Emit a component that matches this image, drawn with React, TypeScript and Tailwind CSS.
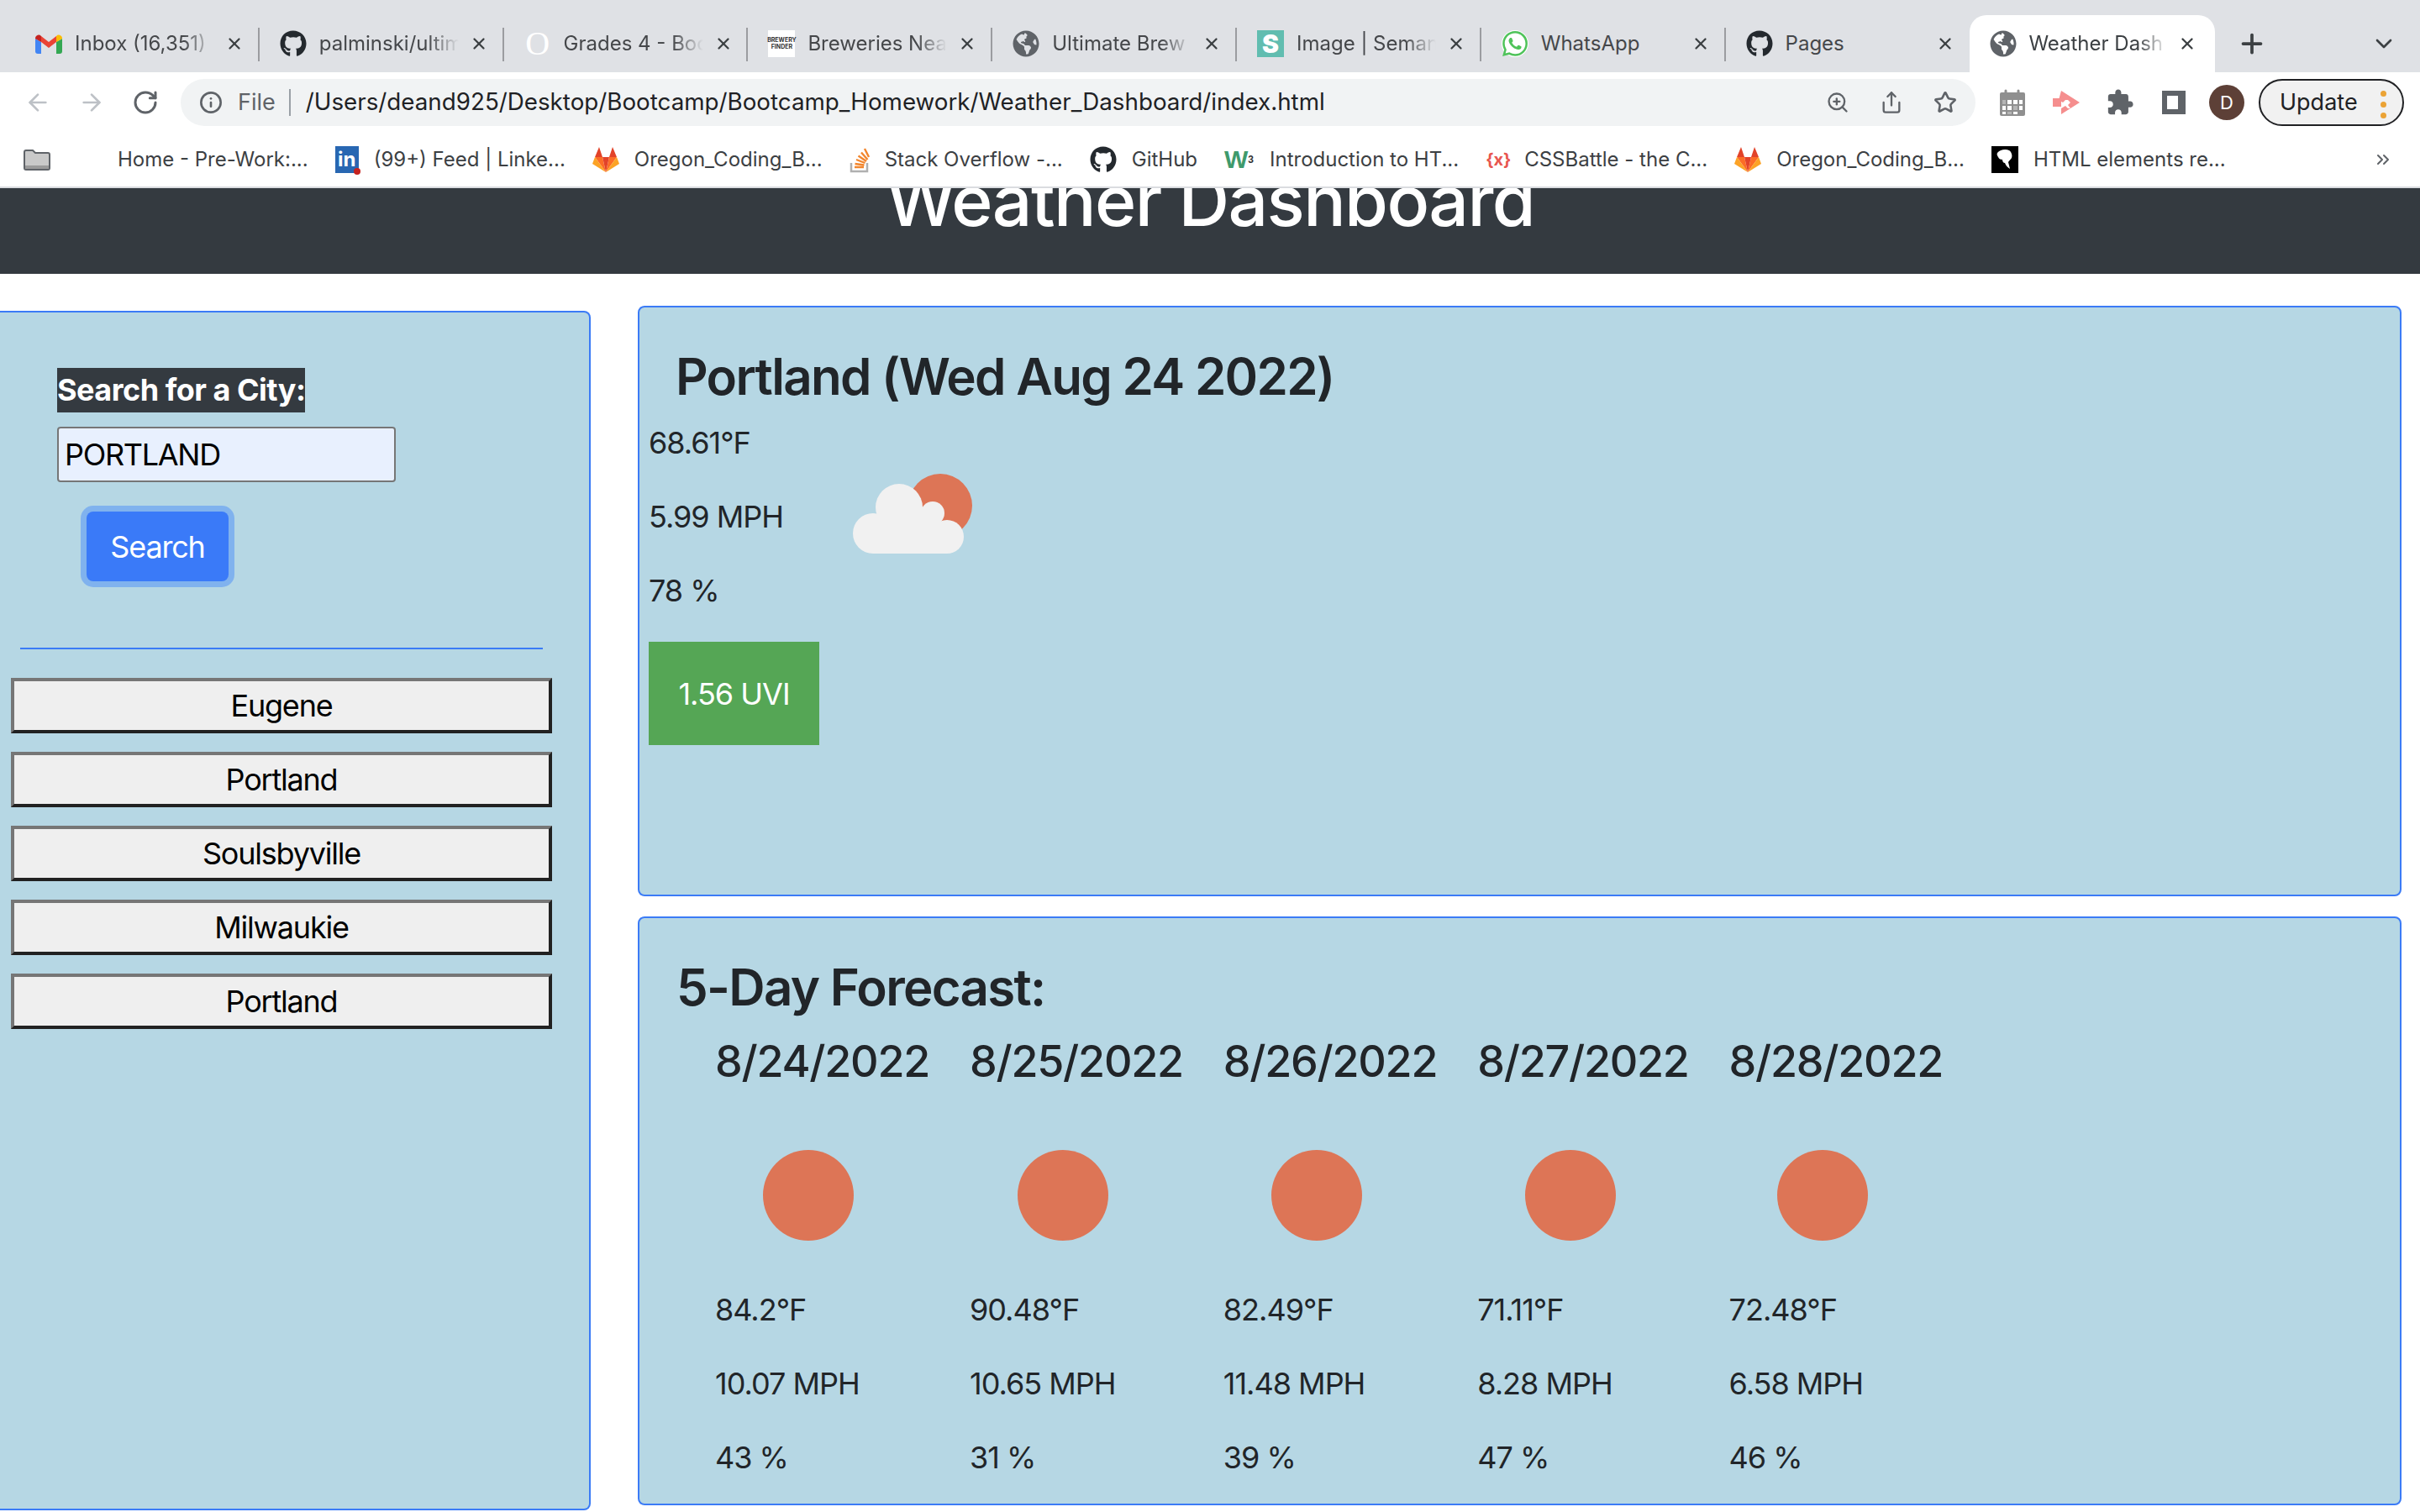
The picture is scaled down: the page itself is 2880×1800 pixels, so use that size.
import { ArrowLeft, ArrowRight, ChevronDown, ChevronsRight, Info, Plus, RotateCw, Share, Star, X, ZoomIn } from "lucide-react";
import type { ReactNode } from "react";
import { FaGithub, FaGlobeAmericas } from "react-icons/fa";
import { SiWhatsapp } from "react-icons/si";

/* ─── Favicons ─── */

function Gmail() {
  return (
    <svg viewBox="0 0 32 24" className="w-8 h-6 shrink-0">
      <path d="M0 6v15a3 3 0 0 0 3 3h4V10z" fill="#4285f4" />
      <path d="M32 6v15a3 3 0 0 1-3 3h-4V10z" fill="#34a853" />
      <path d="M7 10l9 7 9-7V3l-9 7-9-7z" fill="#ea4335" />
      <path d="M0 6V5a4 4 0 0 1 7-2v7z" fill="#c5221f" />
      <path d="M32 6V5a4 4 0 0 0-7-2v7z" fill="#fbbc04" />
    </svg>
  );
}

function GitLab() {
  return (
    <svg viewBox="0 0 32 30" className="w-8 h-[30px] shrink-0">
      <polygon points="3,12 8,0 12,12" fill="#e24329" />
      <polygon points="20,12 24,0 29,12" fill="#e24329" />
      <polygon points="3,12 12,12 16,30" fill="#fc6d26" />
      <polygon points="20,12 29,12 16,30" fill="#fc6d26" />
      <polygon points="12,12 20,12 16,30" fill="#e24329" />
      <polygon points="3,12 0,20 16,30" fill="#fca326" />
      <polygon points="29,12 32,20 16,30" fill="#fca326" />
    </svg>
  );
}

function StackOverflow() {
  return (
    <svg viewBox="0 0 24 32" className="w-6 h-8 shrink-0">
      <path d="M2 20v10h19V20" fill="none" stroke="#b0b0b0" strokeWidth="2.5" />
      <path d="M6 25h11M6.5 21l11 1.5M8 16l10.5 4M10.5 11.5l9.5 6.5M14 7.5l7.5 8.5M18 3l5 10" stroke="#f2862e" strokeWidth="2.4" fill="none" />
    </svg>
  );
}

function Folder() {
  return (
    <svg viewBox="0 0 32 26" className="w-8 h-[26px] shrink-0">
      <path d="M1 4a2 2 0 0 1 2-2h8l3 3h15a2 2 0 0 1 2 2v16a2 2 0 0 1-2 2H3a2 2 0 0 1-2-2z" fill="#c9c9c9" stroke="#5f6368" strokeWidth="2" />
      <path d="M2 20h28v4H2z" fill="#9a9a9a" />
    </svg>
  );
}

function Calendar() {
  return (
    <svg viewBox="0 0 30 32" className="w-[30px] h-8">
      <rect x="0" y="4" width="30" height="28" rx="2" fill="#8f8f8f" />
      <path d="M7 8V2M22 8V2" stroke="#8f8f8f" strokeWidth="3" strokeLinecap="round" />
      <path d="M9 13h5v5H9zM16 13h5v5h-5zM23 13h4v5h-4zM3 20h4v5H3zM9 20h5v5H9zM23 20h4v5h-4zM3 27h4v3H3zM16 27h5v3h-5z" fill="#fff" />
      <path d="M3 13h4v5H3zM16 20h5v5h-5zM9 27h5v3H9z" fill="#b5b5b5" />
    </svg>
  );
}

function ArrowExt() {
  return (
    <svg viewBox="0 0 32 28" className="w-8 h-7">
      <path d="M0 9h10v10H0z" fill="#f58e8e" />
      <path d="M10 0l22 14-22 14v-7l5-3 3 3h3l-3-4 3-3-3-3h-3l-3 3-5-3z" fill="#f58e8e" />
    </svg>
  );
}

function Extension() {
  return (
    <svg viewBox="0 0 24 24" className="w-[34px] h-[34px]">
      <path
        fill="#5f6368"
        d="M20.5 11H19V7c0-1.1-.9-2-2-2h-4V3.5C13 2.12 11.88 1 10.5 1S8 2.12 8 3.5V5H4c-1.1 0-1.99.9-1.99 2v3.8H3.5c1.49 0 2.7 1.21 2.7 2.7s-1.21 2.7-2.7 2.7H2V20c0 1.1.9 2 2 2h3.8v-1.5c0-1.49 1.21-2.7 2.7-2.7 1.49 0 2.7 1.21 2.7 2.7V22H17c1.1 0 2-.9 2-2v-4h1.5c1.38 0 2.5-1.12 2.5-2.5S21.88 11 20.5 11z"
      />
    </svg>
  );
}

function SidebarIcon() {
  return (
    <svg viewBox="0 0 28 28" className="w-7 h-7">
      <path d="M0 0h28v28H0zM6 6v16h13V6z" fill="#5f6368" fillRule="evenodd" />
    </svg>
  );
}

function Dino() {
  return (
    <div className="w-8 h-8 bg-black shrink-0 flex items-center justify-center">
      <svg viewBox="0 0 32 32" className="w-8 h-8">
        <path d="M7 8c3-4 10-5 14-3 3 2 4 6 3 9-1 2-3 3-4 5l2 8c-3-2-5-4-6-7-2 0-3-2-3-4-3 0-4-1-5-3-1-2-2-3-1-5z" fill="#fff" />
      </svg>
    </div>
  );
}

function CloudSun() {
  return (
    <svg viewBox="0 0 142 95" className="w-[142px] h-[95px]">
      <circle cx="104" cy="38" r="38" fill="#dd7556" />
      <g fill="#f1f1f1">
        <circle cx="24" cy="71" r="24" />
        <circle cx="55" cy="40" r="28" />
        <circle cx="95" cy="47" r="14" />
        <circle cx="112" cy="75" r="20" />
        <path d="M24 62h88v33H24zM40 40h60v30H40z" />
      </g>
    </svg>
  );
}

function Sun() {
  return (
    <svg viewBox="0 0 108 108" className="w-[108px] h-[108px] ml-[57px]">
      <circle cx="54" cy="54" r="54" fill="#dd7556" />
    </svg>
  );
}

/* ─── Chrome ─── */

const globe = <FaGlobeAmericas className="w-8 h-8 shrink-0 text-[#5f6368]" />;
const github = <FaGithub className="w-8 h-8 shrink-0 text-[#24292e]" />;

interface TabInfo { title: string; icon: ReactNode; fade?: boolean; sep?: boolean }

const TABS: TabInfo[] = [
  { title: "Inbox (16,351)", icon: <Gmail />, fade: true, sep: true },
  { title: "palminski/ultim", icon: github, fade: true, sep: true },
  { title: "Grades 4 - Boo", icon: <span className="w-8 shrink-0 text-center text-white text-[40px] leading-8 font-['Liberation_Serif',serif]">O</span>, fade: true, sep: true },
  {
    title: "Breweries Nea",
    icon: (
      <span className="w-8 h-8 shrink-0 bg-white flex flex-col items-center justify-center text-[7px] leading-[8px] font-bold text-[#333]">
        <span>BREWERY</span>
        <span>FINDER</span>
      </span>
    ),
    fade: true,
    sep: true,
  },
  { title: "Ultimate Brew", icon: globe, fade: true, sep: true },
  { title: "Image | Seman", icon: <span className="w-8 h-8 shrink-0 bg-[#61bdb0] text-white text-[30px] leading-8 font-black text-center">S</span>, fade: true, sep: true },
  {
    title: "WhatsApp",
    icon: (
      <span className="w-8 h-8 shrink-0 rounded-full bg-white flex items-center justify-center">
        <SiWhatsapp className="w-[30px] h-[30px] text-[#4fc35a]" />
      </span>
    ),
    sep: true,
  },
  { title: "Pages", icon: github },
];

const BOOKMARKS: { title: string; icon?: ReactNode }[] = [
  { title: "Home - Pre-Work:..." },
  {
    title: "(99+) Feed | Linke...",
    icon: (
      <span className="relative w-7 h-8 shrink-0 bg-[#2867b2] text-white text-[24px] leading-8 font-bold text-center">
        in
        <span className="absolute -right-0.5 -bottom-0.5 w-2 h-2 rounded-full bg-[#c5221f]" />
      </span>
    ),
  },
  { title: "Oregon_Coding_B...", icon: <GitLab /> },
  { title: "Stack Overflow -...", icon: <StackOverflow /> },
  { title: "GitHub", icon: github },
  {
    title: "Introduction to HT...",
    icon: (
      <span className="w-9 shrink-0 text-[#3f9a6c] text-[30px] leading-8 font-black font-['Liberation_Sans',sans-serif]">
        W<sup className="text-[12px] text-[#333] font-bold">3</sup>
      </span>
    ),
  },
  { title: "CSSBattle - the C...", icon: <span className="w-7 shrink-0 text-[#e8564f] text-[20px] leading-8 font-bold text-center">{"{x}"}</span> },
  { title: "Oregon_Coding_B...", icon: <GitLab /> },
  { title: "HTML elements re...", icon: <Dino /> },
];

function Tab({ tab }: { tab: TabInfo }) {
  return (
    <div className={`relative w-[290.8px] h-[68px] flex items-center pl-6 shrink-0 ${tab.sep ? "after:absolute after:right-0 after:top-[15px] after:h-10 after:w-0.5 after:bg-[#9b9ca0]" : ""}`}>
      {tab.icon}
      <span className={`ml-[15px] w-[166px] whitespace-nowrap overflow-hidden text-[24px] text-[#45474a] ${tab.fade ? "[mask-image:linear-gradient(to_right,black_78%,transparent)]" : ""}`}>
        {tab.title}
      </span>
      <X className="absolute left-[250px] top-[23px] w-[22px] h-[22px] text-[#3c4043]" strokeWidth={2.5} />
    </div>
  );
}

function BrowserChrome() {
  return (
    <div className="shrink-0 bg-white">
      <div className="h-[86px] bg-[#dfe1e5] flex items-end pl-[18px]">
        {TABS.map(t => <Tab key={t.title} tab={t} />)}
        <div className="relative w-[292px] h-[68px] bg-white rounded-t-[20px] flex items-center pl-6 shrink-0">
          {globe}
          <span className="ml-[14px] w-[166px] whitespace-nowrap overflow-hidden text-[24px] text-[#3c4043] [mask-image:linear-gradient(to_right,black_78%,transparent)]">Weather Dash</span>
          <X className="absolute left-[248px] top-[23px] w-[22px] h-[22px] text-[#3c4043]" strokeWidth={2.5} />
        </div>
        <div className="h-[68px] flex items-center ml-[26px]">
          <Plus className="w-9 h-9 text-[#3c4043]" strokeWidth={2.5} />
        </div>
        <div className="h-[68px] flex items-center ml-[123px]">
          <ChevronDown className="w-8 h-8 text-[#3c4043]" strokeWidth={2} />
        </div>
      </div>

      <div className="h-[72px] flex items-center pl-[29px] pr-[18px]">
        <ArrowLeft className="w-8 h-8 text-[#bdc1c6]" strokeWidth={2} />
        <ArrowRight className="w-8 h-8 ml-8 text-[#bdc1c6]" strokeWidth={2} />
        <RotateCw className="w-8 h-8 ml-8 text-[#5f6368]" strokeWidth={2.25} />
        <div className="ml-[26px] w-[2136px] h-14 rounded-full bg-[#f1f3f4] flex items-center pl-[22px] pr-[22px]">
          <Info className="w-7 h-7 text-[#5f6368]" strokeWidth={2.25} />
          <span className="ml-[18px] text-[27px] text-[#5f6368]">File</span>
          <span className="ml-4 w-0.5 h-8 bg-[#9aa0a6]" />
          <span className="ml-[18px] text-[27.75px] text-[#202124] whitespace-nowrap">/Users/deand925/Desktop/Bootcamp/Bootcamp_Homework/Weather_Dashboard/index.html</span>
          <ZoomIn className="ml-auto w-7 h-7 text-[#5f6368]" strokeWidth={2} />
          <Share className="ml-9 w-7 h-7 text-[#5f6368]" strokeWidth={2} />
          <Star className="ml-9 w-7 h-7 text-[#5f6368]" strokeWidth={2.25} />
        </div>
        <div className="ml-[29px]"><Calendar /></div>
        <div className="ml-[33px]"><ArrowExt /></div>
        <div className="ml-[31px] flex"><Extension /></div>
        <div className="ml-[33px] flex"><SidebarIcon /></div>
        <div className="ml-[28px] w-[42px] h-[42px] rounded-full bg-[#5d4037] text-white text-[22px] flex items-center justify-center">D</div>
        <div className="ml-[17px] w-[173px] h-14 rounded-full border-2 border-[#202124] bg-[#f1f1f1] flex items-center pl-[23px] relative">
          <span className="text-[27px] text-[#202124]">Update</span>
          <span className="absolute left-[143px] top-3 flex flex-col gap-[6px]">
            <span className="w-[7px] h-[7px] rounded-full bg-[#eba335]" />
            <span className="w-[7px] h-[7px] rounded-full bg-[#eba335]" />
            <span className="w-[7px] h-[7px] rounded-full bg-[#eba335]" />
          </span>
        </div>
      </div>

      <div className="h-[64px] flex items-center pl-7 pr-8 border-b-2 border-[#dadce0] box-content">
        <Folder />
        <div className="ml-20 flex items-center gap-8">
          {BOOKMARKS.map((b, i) => (
            <div key={i} className="flex items-center gap-[18px] text-[24px] text-[#3c4043] whitespace-nowrap">
              {b.icon}
              <span>{b.title}</span>
            </div>
          ))}
        </div>
        <ChevronsRight className="ml-auto w-6 h-6 text-[#5f6368]" strokeWidth={2} />
      </div>
    </div>
  );
}

/* ─── Page ─── */

const CITIES = ["Eugene", "Portland", "Soulsbyville", "Milwaukie", "Portland"];

const FORECAST = [
  { date: "8/24/2022", temp: "84.2°F", wind: "10.07 MPH", hum: "43 %" },
  { date: "8/25/2022", temp: "90.48°F", wind: "10.65 MPH", hum: "31 %" },
  { date: "8/26/2022", temp: "82.49°F", wind: "11.48 MPH", hum: "39 %" },
  { date: "8/27/2022", temp: "71.11°F", wind: "8.28 MPH", hum: "47 %" },
  { date: "8/28/2022", temp: "72.48°F", wind: "6.58 MPH", hum: "46 %" },
];

function Sidebar() {
  return (
    <aside className="w-[703px] h-[1428px] mt-[44px] shrink-0 bg-[#b6d7e4] border-2 border-l-0 border-[#3b7bf6] rounded-r-lg">
      <div className="pl-[68px] pt-[66px]">
        <div className="w-fit h-[53px] bg-[#343a40] text-white text-[36px] tracking-[-0.5px] font-bold leading-[53px] whitespace-nowrap">Search for a City:</div>
        <input
          readOnly
          value="PORTLAND"
          className="block mt-[17px] w-[403px] h-[66px] bg-[#e8f0fe] border-2 border-[#767676] rounded pl-[7px] text-[36px] tracking-[-1.3px] text-black outline-none"
        />
        <button className="block mt-[35px] ml-[35px] w-[169px] h-[83px] rounded-lg bg-[#3a7af8] ring-[7px] ring-[#80b2ee] text-white text-[36px] tracking-[-1.2px]">Search</button>
      </div>
      <div className="mt-[79px] ml-6 w-[622px] h-0.5 bg-[#3b7bf6]" />
      <div className="mt-[34px] ml-[13px] w-[644px] flex flex-col gap-[22px]">
        {CITIES.map((c, i) => (
          <button key={i} className="h-[66px] bg-[#efefef] border-4 border-t-[#767676] border-l-[#767676] border-b-[#212121] border-r-[#212121] text-[36px] tracking-[-1.2px] text-black">
            {c}
          </button>
        ))}
      </div>
    </aside>
  );
}

function CurrentCard() {
  return (
    <section className="h-[703px] bg-[#b6d7e4] border-2 border-[#3b7bf6] rounded-lg pl-[11px] pt-[46px]">
      <h2 className="ml-8 text-[60px] tracking-[-1.7px] leading-[72px] font-semibold text-[#212529]">Portland (Wed Aug 24 2022)</h2>
      <div className="flex items-start mt-[16px]">
        <div className="w-[243px] shrink-0 text-[36px] tracking-[-1px] leading-[54px] text-[#212529]">
          <p className="mb-[34px]">68.61°F</p>
          <p className="mb-[34px]">5.99 MPH</p>
          <p className="mb-[34px]">78 %</p>
          <div className="w-[203px] h-[123px] bg-[#55a655] text-white flex items-center justify-center">1.56 UVI</div>
        </div>
        <div className="mt-[64px]"><CloudSun /></div>
      </div>
    </section>
  );
}

function ForecastCard() {
  return (
    <section className="h-[701px] mt-6 bg-[#b6d7e4] border-2 border-[#3b7bf6] rounded-lg pl-11 pt-[46px]">
      <h2 className="text-[60px] tracking-[-1.7px] leading-[72px] font-semibold text-[#212529]">5-Day Forecast:</h2>
      <div className="flex gap-[48px] ml-[46px] mt-[22px]">
        {FORECAST.map(d => (
          <div key={d.date}>
            <h3 className="text-[52px] tracking-[-1.25px] leading-[62px] font-medium text-[#212529] whitespace-nowrap">{d.date}</h3>
            <div className="mt-[74px]"><Sun /></div>
            <div className="mt-[55px] text-[36px] tracking-[-1px] leading-[54px] text-[#212529]">
              <p className="mb-[34px]">{d.temp}</p>
              <p className="mb-[34px]">{d.wind}</p>
              <p>{d.hum}</p>
            </div>
          </div>
        ))}
      </div>
    </section>
  );
}

export default function App() {
  return (
    <div className="w-[2880px] h-[1800px] overflow-hidden bg-white flex flex-col font-['Inter','Liberation_Sans',sans-serif]">
      <BrowserChrome />
      <header className="h-[102px] shrink-0 bg-[#343a40] overflow-hidden">
        <h1 className="-mt-[35px] text-center text-white text-[84px] tracking-[-1.6px] leading-[100px] font-[450]">Weather Dashboard</h1>
      </header>
      <div className="flex items-start">
        <Sidebar />
        <main className="ml-[56px] w-[2099px] mt-[38px]">
          <CurrentCard />
          <ForecastCard />
        </main>
      </div>
    </div>
  );
}
